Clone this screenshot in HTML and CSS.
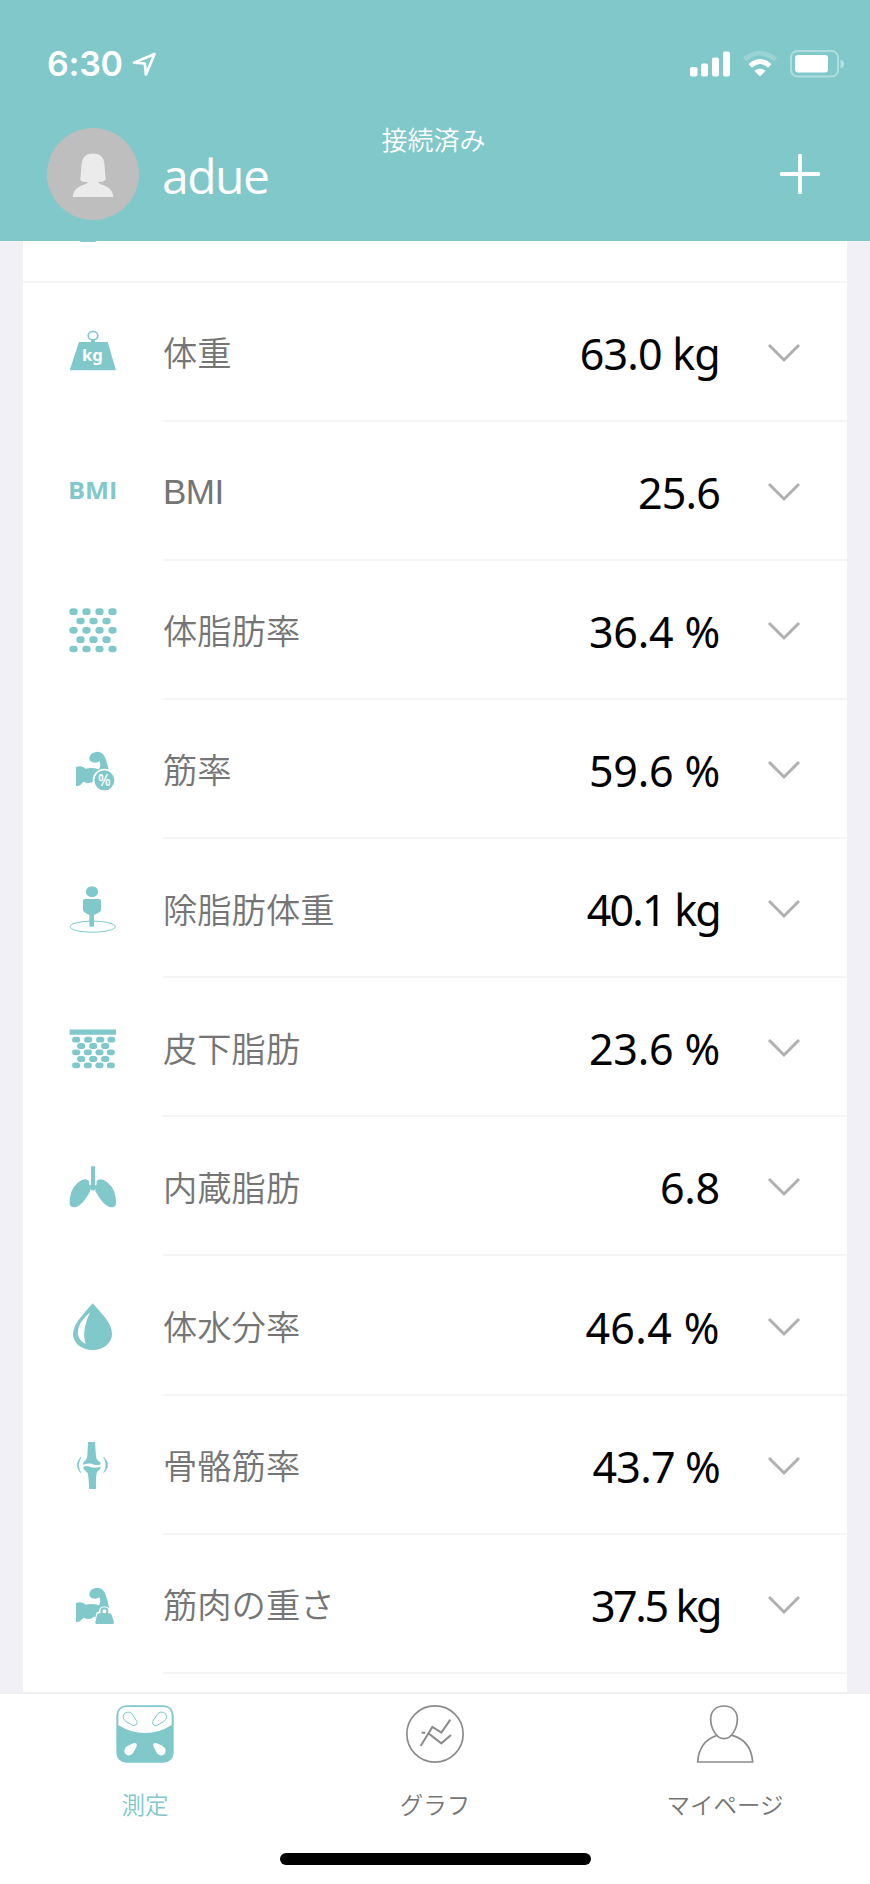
FILE: index.html
```html
<!DOCTYPE html>
<html lang="ja">
<head>
  <meta charset="UTF-8" />
  <meta name="viewport" content="width=device-width, initial-scale=1.0"/>
  <title>測定</title>
  <link rel="stylesheet" href="styles.css">
</head>
<body>

  <svg class="defs" width="0" height="0">
    <symbol id="chevron" viewBox="0 0 34 20">
      <path d="M2 2 L17 17 L32 2" fill="none" stroke="#b0b0b0" stroke-width="3"/>
    </symbol>
    <symbol id="arm" viewBox="0 0 180 180">
      <path d="M39 84 Q57 77 68 89 Q86 84 108 91 Q115 79 109 67 Q101 74 88 70 Q78 66 79 56 Q81 40 103 38 Q119 39 126 55 Q133 71 138 99 L138 125 H93 Q81 138 61 128 L51 139 Q44 142 39 140 Z"/>
    </symbol>
  </svg>

  <header class="header">
    <div class="status-bar">
      <div class="status-left">
        <span class="time">6:30</span>
        <svg width="25" height="25" viewBox="0 0 25 25"><path d="M22.5 2 L2 10.7 L12.8 11.5 L14 22.5 Z" fill="none" stroke="#fff" stroke-width="2.7" stroke-linejoin="round"/></svg>
      </div>
      <div class="status-right">
        <svg width="40" height="26" viewBox="0 0 40 26" fill="#fff">
          <rect x="0" y="16" width="7.5" height="9.5" rx="2"/>
          <rect x="11" y="12.5" width="7" height="13" rx="2"/>
          <rect x="22" y="6.5" width="7" height="19" rx="2"/>
          <rect x="33" y="0.5" width="7" height="25" rx="2"/>
        </svg>
        <svg width="36" height="26" viewBox="0 0 36 26" fill="none" stroke="#fff">
          <path d="M2.5 8.5 Q18 -4 33.5 8.5" stroke-width="5" opacity=".2"/>
          <path d="M8.2 14.8 Q18 6.2 27.8 14.8" stroke-width="5"/>
          <path d="M18 25.5 L12.3 19.8 Q18 15.5 23.7 19.8 Z" fill="#fff" stroke="none"/>
        </svg>
        <svg width="55" height="28" viewBox="0 0 55 28" fill="#fff">
          <rect x="1" y="1" width="47" height="25.5" rx="6.5" fill="none" stroke="#fff" stroke-width="2" opacity=".38"/>
          <rect x="5" y="5" width="33" height="17.5" rx="3"/>
          <path d="M50.5 9.5 Q54 10.5 54 14 Q54 17.5 50.5 18.5 Z" opacity=".45"/>
        </svg>
      </div>
    </div>
    <div class="user-row">
      <div class="user">
        <div class="avatar">
          <svg width="42" height="44" viewBox="0 0 42 44" fill="#ebebeb"><path d="M21 .5 Q32 .5 32.5 12 L33.7 27 Q31 29.5 26 29 Q27 31 33 32.7 Q41 36 41.3 44 H.7 Q1 36 9 32.7 Q15 31 16 29 Q10 29.5 8.3 27 L9.5 12 Q10 .5 21 .5 Z"/></svg>
        </div>
        <span class="user-name">adue</span>
      </div>
      <span class="connected">接続済み</span>
      <svg class="add" width="40" height="40" viewBox="0 0 40 40"><path d="M20 1.5 V38.5 M1.5 20 H38.5" stroke="#fff" stroke-width="3.8" stroke-linecap="round"/></svg>
    </div>
  </header>

  <main class="content">
    <div class="card">
      <div class="row-hidden"><span class="hidden-icon"></span></div>

      <div class="row">
        <svg class="icon" viewBox="0 0 180 180">
          <ellipse cx="90" cy="41" rx="14.5" ry="12.5" fill="none" stroke="#80c8ca" stroke-width="5"/>
          <path d="M48 60 H84 V54 H96 V60 H134 L159 145 H20 Z"/>
          <text class="icon-text unit" x="88" y="116" font-size="50" fill="#fff" text-anchor="middle">kg</text>
        </svg>
        <div class="cell"><span class="label">体重</span><span class="value">63.0 kg</span><svg class="chevron"><use href="#chevron"/></svg></div>
      </div>

      <div class="row">
        <svg class="icon" viewBox="0 0 180 180">
          <text class="icon-text" x="15" y="114" font-size="70" textLength="148" lengthAdjust="spacingAndGlyphs">BMI</text>
        </svg>
        <div class="cell"><span class="label latin">BMI</span><span class="value">25.6</span><svg class="chevron"><use href="#chevron"/></svg></div>
      </div>

      <div class="row">
        <svg class="icon" viewBox="0 0 180 180" fill="none" stroke="#80c8ca" stroke-width="20" stroke-linecap="round">
          <path d="M29 35h5 M68 35h5 M107 35h5 M146 35h5 M50 63h5 M89 63h5 M128 63h5 M29 91h5 M68 91h5 M107 91h5 M146 91h5 M50 119h5 M89 119h5 M128 119h5 M29 147h5 M68 147h5 M107 147h5 M146 147h5"/>
        </svg>
        <div class="cell"><span class="label">体脂肪率</span><span class="value percent">36.4 %</span><svg class="chevron"><use href="#chevron"/></svg></div>
      </div>

      <div class="row">
        <svg class="icon" viewBox="0 0 180 180">
          <use href="#arm"/>
          <circle cx="124" cy="124" r="32.5" stroke="#fff" stroke-width="5"/>
          <text class="icon-text thin" x="124" y="141" font-size="48" fill="#fff" text-anchor="middle" textLength="38" lengthAdjust="spacingAndGlyphs">%</text>
        </svg>
        <div class="cell"><span class="label">筋率</span><span class="value percent">59.6 %</span><svg class="chevron"><use href="#chevron"/></svg></div>
      </div>

      <div class="row">
        <svg class="icon" viewBox="0 0 180 180">
          <ellipse cx="89" cy="143" rx="68" ry="16.5" fill="none" stroke="#80c8ca" stroke-width="3"/>
          <ellipse cx="87" cy="38" rx="18.5" ry="16.5"/>
          <path d="M68 60 H106 Q114 60 114 67 V94 Q112 101 93 108 V140 Q93 143 90 143 H82 Q79 143 79 140 V108 Q62 101 60 94 V67 Q60 60 68 60 Z"/>
        </svg>
        <div class="cell"><span class="label">除脂肪体重</span><span class="value one">40.1 kg</span><svg class="chevron"><use href="#chevron"/></svg></div>
      </div>

      <div class="row">
        <svg class="icon" viewBox="0 0 180 180" stroke="#80c8ca" stroke-width="17.5" stroke-linecap="round">
          <path d="M20 34.5 H159 V50 H20 Z" stroke="none"/>
          <path d="M36 65h7 M72 65h7 M108 65h7 M142 65h6 M51 84h7 M87 84h7 M123 84h7 M36 103h7 M71 103h7 M106 103h7 M140 103h7 M51 123h7 M87 123h7 M123 123h7 M36 142h7 M71 142h7 M106 142h7 M140 142h7"/>
        </svg>
        <div class="cell"><span class="label">皮下脂肪</span><span class="value percent">23.6 %</span><svg class="chevron"><use href="#chevron"/></svg></div>
      </div>

      <div class="row">
        <svg class="icon" viewBox="0 0 180 180">
          <path d="M84 28 H96 V80 L104 86 L96 100 H84 L76 86 L84 80 Z"/>
          <path d="M78 72 Q66 60 46 76 Q18 99 20 142 Q22 153 40 150 Q60 143 82 102 Q78 87 78 72 Z"/>
          <path d="M101 72 Q113 60 133 76 Q161 99 159 142 Q157 153 139 150 Q119 143 97 102 Q101 87 101 72 Z"/>
          <path d="M81.5 70 V85 M98 70 V85" stroke="#fff" stroke-width="3"/>
        </svg>
        <div class="cell"><span class="label">内蔵脂肪</span><span class="value percent">6.8</span><svg class="chevron"><use href="#chevron"/></svg></div>
      </div>

      <div class="row">
        <svg class="icon" viewBox="0 0 180 180">
          <path d="M89 22 Q109 44 128 67 Q147 92 147 114 C147 141 122 162 89 162 C56 162 30 141 30 114 Q31 91 51 67 Q70 43 89 22 Z"/>
          <path d="M81 49 Q44 80 44 112 Q47 134 68 144 Q55 106 81 49 Z" fill="#fff"/>
        </svg>
        <div class="cell"><span class="label">体水分率</span><span class="value wide">46.4 %</span><svg class="chevron"><use href="#chevron"/></svg></div>
      </div>

      <div class="row">
        <svg class="icon" viewBox="0 0 180 180">
          <path d="M75 21 H96 L99 65 Q101 76 112 82 Q115 92 104 90 Q94 91 86 86 Q75 84 61 89 Q59 84 62 81 Q72 75 73 61 Z"/>
          <path d="M60 97 Q70 90 82 96 Q94 101 114 95 Q112 104 102 110 Q98 125 99 162 H78 Q78 132 74 114 Q62 105 60 97 Z"/>
          <path d="M54 66 Q32 90 53 113 Q40 90 54 66 Z M122 66 Q146 90 122 113 Q136 90 122 66 Z" stroke="#80c8ca" stroke-width="2"/>
        </svg>
        <div class="cell"><span class="label">骨骼筋率</span><span class="value">43.7 %</span><svg class="chevron"><use href="#chevron"/></svg></div>
      </div>

      <div class="row">
        <svg class="icon" viewBox="0 0 180 180">
          <use href="#arm" y="3"/>
          <path d="M91 158 L100 116 L108 112 Q108 98 124 97 Q140 98 140 112 L148 118 L160 158 Z" fill="#fff"/>
          <circle cx="124" cy="112" r="9" fill="none" stroke="#80c8ca" stroke-width="6"/>
          <path d="M108 118 H119 Q124 123 129 118 H140 Q145 118 146 123 L153 145 Q153 150 149 150 H100 Q96 150 97 145 L102 123 Q103 118 108 118 Z"/>
        </svg>
        <div class="cell"><span class="label">筋肉の重さ</span><span class="value tight">37.5 kg</span><svg class="chevron"><use href="#chevron"/></svg></div>
      </div>
    </div>
  </main>

  <nav class="tab-bar">
    <div class="tabs">
      <div class="tab active">
        <svg width="58" height="58" viewBox="0 0 174 174">
          <rect x="1" y="1" width="172" height="172" rx="30" fill="#80c8ca"/>
          <path d="M7 60 V32 Q7 6 32 6 H142 Q167 6 167 32 V60 Q130 84 87 84 Q44 84 7 60 Z" fill="#fff"/>
          <path d="M27 24 Q43 16 51 31 L63 50 Q64 64 50 61 L30 50 Q14 36 27 24 Z M146 24 Q130 16 122 31 L110 50 Q109 64 123 61 L143 50 Q159 36 146 24 Z" fill="none" stroke="#80c8ca" stroke-width="3"/>
          <path d="M35 122 L54 114 Q64 112 62 124 L51 145 Q45 153 34 151 Q24 146 25 136 Q27 126 35 122 Z M139 122 L120 114 Q110 112 112 124 L123 145 Q129 153 140 151 Q150 146 149 136 Q147 126 139 122 Z" fill="#fff"/>
        </svg>
        <span>測定</span>
      </div>
      <div class="tab">
        <svg width="58" height="58" viewBox="0 0 174 174" fill="none" stroke="#8b8b8b" stroke-width="5">
          <circle cx="87" cy="87" r="84.5"/>
          <path d="M44 123 L79 66 L106 83 L133 44 M47 83 H58 M69 86 L106 115 L135 90" stroke-width="6"/>
        </svg>
        <span>グラフ</span>
      </div>
      <div class="tab">
        <svg width="58" height="58" viewBox="0 0 174 174" fill="none" stroke="#8b8b8b" stroke-width="5">
          <path d="M84 3 C108 3 124 18 124 42 C124 68 108 101 84 101 C60 101 44 68 44 42 C44 18 60 3 84 3 Z"/>
          <path d="M60 92 Q9 110 5 171 H170 Q165 106 108 91"/>
        </svg>
        <span>マイページ</span>
      </div>
    </div>
    <div class="home-indicator"></div>
  </nav>

</body>
</html>
```

FILE: styles.css
```css
* {
  box-sizing: border-box;
}

body {
  margin: 0;
  height: 1884px;
  display: flex;
  flex-direction: column;
  overflow: hidden;
  background-color: #f1f0f6;
  font-family: "Noto Sans CJK JP", sans-serif;
}

svg {
  display: block;
  flex-shrink: 0;
}

.defs {
  position: absolute;
}

.header {
  height: 241px;
  flex-shrink: 0;
  background-color: #80c8ca;
  color: #fff;
}

.status-bar {
  height: 128px;
  padding: 0 25px 0 47px;
  display: flex;
  justify-content: space-between;
  align-items: center;
}

.status-left {
  display: flex;
  align-items: center;
  gap: 9px;
}

.time {
  font-family: Inter, sans-serif;
  font-size: 34px;
  font-weight: 600;
  letter-spacing: -0.2px;
  line-height: 40px;
}

.status-right {
  display: flex;
  align-items: center;
  gap: 12px;
}

.user-row {
  height: 92px;
  padding: 0 50px 0 47px;
  display: grid;
  grid-template-columns: 1fr auto 1fr;
  align-items: center;
}

.user {
  display: flex;
  align-items: center;
  gap: 23px;
}

.avatar {
  width: 92px;
  height: 92px;
  padding-top: 2px;
  border-radius: 50%;
  background-color: #bebebe;
  display: flex;
  align-items: center;
  justify-content: center;
}

.user-name {
  padding-top: 4px;
  font-family: "Open Sans", sans-serif;
  font-size: 48px;
  font-weight: 400;
  letter-spacing: -1.5px;
  line-height: 60px;
}

.connected {
  align-self: start;
  font-size: 26px;
  font-weight: 350;
  line-height: 21px;
}

.add {
  justify-self: end;
}

.content {
  height: 1451px;
  flex-shrink: 0;
  padding: 0 23px;
  overflow: hidden;
}

.card {
  height: 100%;
  background-color: #fff;
}

.row-hidden {
  height: 41.5px;
  padding-left: 57px;
  border-bottom: 2px solid #f5f5f8;
}

.hidden-icon {
  display: block;
  width: 16px;
  height: 1px;
  border-radius: 0 0 8px 8px;
  background-color: #80c8ca;
}

.row {
  height: 139.15px;
  padding-left: 40px;
  display: flex;
  align-items: center;
}

.icon {
  width: 60px;
  height: 60px;
  margin-right: 40px;
  fill: #80c8ca;
}

.icon-text {
  font-family: "Open Sans", sans-serif;
  font-weight: 700;
}

.icon-text.unit {
  font-family: "Noto Sans", sans-serif;
}

.icon-text.thin {
  font-weight: 600;
}

.cell {
  flex: 1;
  height: 100%;
  padding-right: 46px;
  display: flex;
  align-items: center;
  border-bottom: 2px solid #f5f5f8;
}

.label {
  font-size: 34.3px;
  font-weight: 350;
  line-height: 50px;
  color: #757575;
}

.label.latin {
  padding-top: 3px;
  font-family: "Liberation Sans", sans-serif;
  font-size: 35px;
  letter-spacing: -0.5px;
}

.value {
  margin-left: auto;
  margin-right: 47px;
  padding-top: 5px;
  font-family: "Noto Sans", sans-serif;
  font-size: 43px;
  font-weight: 400;
  letter-spacing: -0.8px;
  line-height: 50px;
  color: #000;
}

.value.percent {
  letter-spacing: -0.2px;
}

.value.wide {
  letter-spacing: 0.4px;
}

.value.one {
  letter-spacing: -1.8px;
}

.value.tight {
  letter-spacing: -2.4px;
}

.chevron {
  width: 34px;
  height: 20px;
  margin-top: 3px;
}

.tab-bar {
  height: 192px;
  flex-shrink: 0;
  padding-top: 11px;
  border-top: 2px solid #efeff4;
  background-color: #fff;
}

.tabs {
  display: grid;
  grid-template-columns: repeat(3, 1fr);
}

.tab {
  display: flex;
  flex-direction: column;
  align-items: center;
  gap: 23px;
  font-size: 23.5px;
  font-weight: 350;
  line-height: 36px;
  color: #757575;
}

.tab.active {
  color: #80c8ca;
}

.home-indicator {
  width: 311px;
  height: 12px;
  margin: 31px auto 0;
  border-radius: 6px;
  background-color: #000;
}
```
